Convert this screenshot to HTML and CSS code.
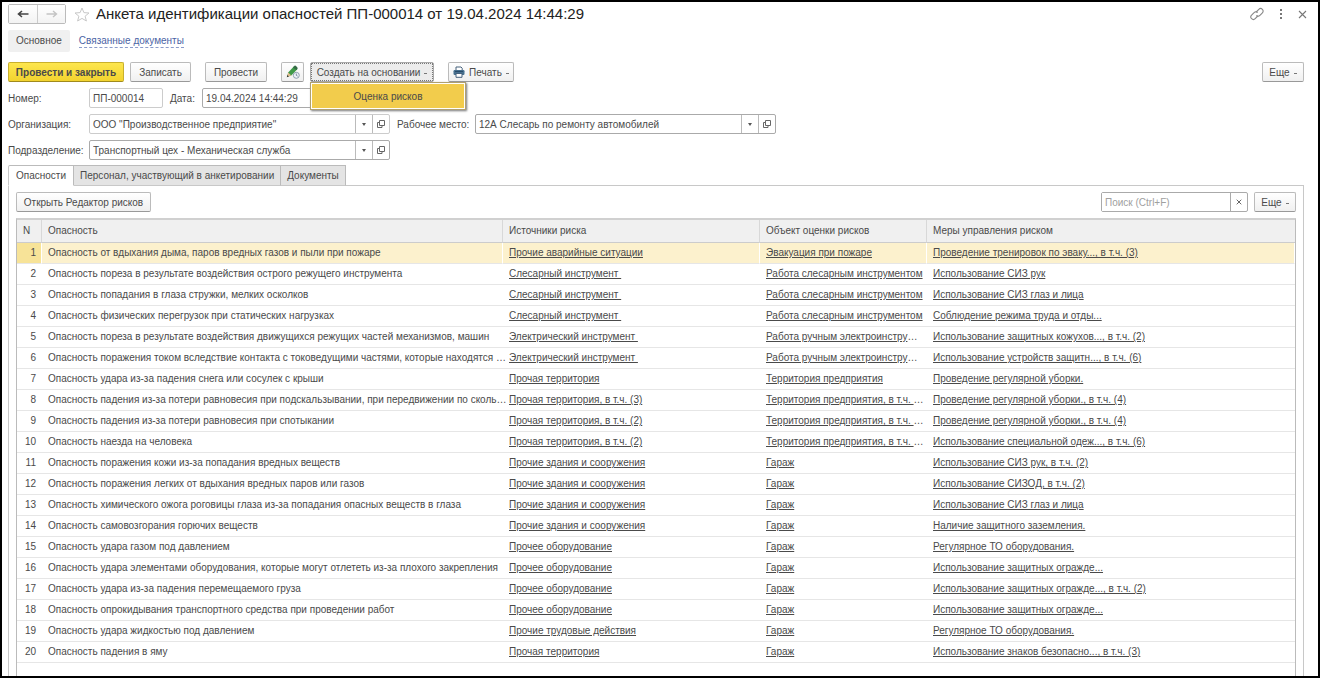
FILE: index.html
```
<!DOCTYPE html>
<html lang="ru">
<head>
<meta charset="utf-8">
<title>Анкета идентификации опасностей</title>
<link rel="stylesheet" href="styles.css">
</head>
<body>
<div class="window">
  <header class="titlebar">
    <div class="history">
      <button type="button" class="history-btn" aria-label="Назад"><svg width="12" height="8" viewBox="0 0 12 8"><path d="M11.500 4H2M5 1L1.500 4L5 7" fill="none" stroke="#444" stroke-width="1.600"/></svg></button>
      <button type="button" class="history-btn" aria-label="Вперед"><svg width="12" height="8" viewBox="0 0 12 8"><path d="M.5 4H10M7 1L10.500 4L7 7" fill="none" stroke="#c4c4c4" stroke-width="1.400"/></svg></button>
    </div>
    <svg class="star" width="16" height="15" viewBox="0 0 16 15"><path d="M8 1L9.900 5.600L15 6L11.100 9.200L12.400 14L8 11.400L3.600 14L4.900 9.200L1 6L6.100 5.600Z" fill="none" stroke="#c8c8c8" stroke-width="1"/></svg>
    <h1 class="title">Анкета идентификации опасностей ПП-000014 от 19.04.2024 14:44:29</h1>
    <div class="window-tools">
      <button type="button" class="tool" aria-label="Ссылка"><svg width="14" height="14" viewBox="0 0 14 14"><g fill="none" stroke="#888" stroke-width="1.100" stroke-linecap="round"><path d="M6.200 5L8.800 2.300A2.500 2.500 0 0 1 12.400 5.900L9.900 8.400A2.500 2.500 0 0 1 6.700 8.700"/><path d="M7.800 9L5.200 11.700A2.500 2.500 0 0 1 1.600 8.100L4.100 5.600A2.500 2.500 0 0 1 7.300 5.300"/></g></svg></button>
      <button type="button" class="tool" aria-label="Меню"><svg width="4" height="10" viewBox="0 0 4 10"><path d="M1 0h2v2H1zM1 4h2v2H1zM1 8h2v2H1z" fill="#777"/></svg></button>
      <button type="button" class="tool" aria-label="Закрыть"><svg width="9" height="9" viewBox="0 0 9 9"><path d="M1 1L8 8M8 1L1 8" stroke="#777" stroke-width="1.100"/></svg></button>
    </div>
  </header>

  <nav class="sections">
    <span class="section-current">Основное</span>
    <a class="section-link" href="#docs">Связанные документы</a>
  </nav>

  <div class="commands">
    <button type="button" class="btn btn-primary">Провести и закрыть</button>
    <button type="button" class="btn btn-save">Записать</button>
    <button type="button" class="btn btn-post">Провести</button>
    <button type="button" class="btn btn-icon" aria-label="Подписать"><svg width="14" height="14" viewBox="0 0 14 14"><path d="M1 12L2.200 7.600L8 1.300L11.300 4.300L5.300 10.600Z" fill="#3f9a49"/><path d="M7 2.400L8.500.8Q9.200.3 10 1L11.400 2.400Q12 3.100 11.400 3.900L10.300 5Z" fill="#346b45"/><path d="M1 12L2.200 7.600L5.300 10.600Z" fill="#e2bb8b"/><path d="M.8 12.200L1.400 10.100L2.900 11.500Z" fill="#333"/><circle cx="10.300" cy="10.300" r="3" fill="#eef3f8" stroke="#8296a8" stroke-width=".9"/><path d="M10.300 8.500V10.400L11.600 11.100" fill="none" stroke="#59718a" stroke-width=".8"/></svg></button>
    <div class="dropdown">
      <button type="button" class="btn btn-open" aria-expanded="true">Создать на основании<span class="caret"></span></button>
      <div class="menu"><button type="button" class="menu-item">Оценка рисков</button></div>
    </div>
    <button type="button" class="btn btn-print"><svg width="12" height="12" viewBox="0 0 12 12"><path d="M3 4V1H8L9.200 2.200V4" fill="#fff" stroke="#47627d" stroke-width="1"/><rect x=".5" y="4" width="11" height="5" rx="1.200" fill="#47708f"/><path d="M2 5.500H10" stroke="#284b69" stroke-width="1"/><path d="M3 7.500H9V11.300H3Z" fill="#fff" stroke="#47627d" stroke-width="1"/></svg>Печать<span class="caret"></span></button>
    <button type="button" class="btn btn-more">Еще<span class="caret"></span></button>
  </div>

  <form class="fields">
    <div class="field-row">
      <label class="label" for="num">Номер:</label>
      <input class="input input-num" id="num" value="ПП-000014" readonly>
      <label class="label-date" for="date">Дата:</label>
      <input class="input input-date" id="date" value="19.04.2024 14:44:29">
    </div>
    <div class="field-row">
      <label class="label" for="org">Организация:</label>
      <div class="combo combo-soft">
        <input class="combo-input" id="org" value='ООО "Производственное предприятие"'>
        <button type="button" class="combo-btn" aria-label="Выбрать"><span class="arrow"></span></button>
        <button type="button" class="combo-btn" aria-label="Открыть"><svg width="8" height="8" viewBox="0 0 8 8"><path d="M2.500.5H7.500V5.500H2.500ZM2.500 2.500H.5V7.500H5V5.500" fill="none" stroke="#666"/></svg></button>
      </div>
      <label class="label-place" for="place">Рабочее место:</label>
      <div class="combo">
        <input class="combo-input" id="place" value="12А Слесарь по ремонту автомобилей">
        <button type="button" class="combo-btn" aria-label="Выбрать"><span class="arrow"></span></button>
        <button type="button" class="combo-btn" aria-label="Открыть"><svg width="8" height="8" viewBox="0 0 8 8"><path d="M2.500.5H7.500V5.500H2.500ZM2.500 2.500H.5V7.500H5V5.500" fill="none" stroke="#666"/></svg></button>
      </div>
    </div>
    <div class="field-row">
      <label class="label" for="dep">Подразделение:</label>
      <div class="combo">
        <input class="combo-input" id="dep" value="Транспортный цех - Механическая служба">
        <button type="button" class="combo-btn" aria-label="Выбрать"><span class="arrow"></span></button>
        <button type="button" class="combo-btn" aria-label="Открыть"><svg width="8" height="8" viewBox="0 0 8 8"><path d="M2.500.5H7.500V5.500H2.500ZM2.500 2.500H.5V7.500H5V5.500" fill="none" stroke="#666"/></svg></button>
      </div>
    </div>
  </form>

  <div class="tabs" role="tablist">
    <button type="button" class="tab tab-active" role="tab" aria-selected="true">Опасности</button>
    <button type="button" class="tab" role="tab">Персонал, участвующий в анкетировании</button>
    <button type="button" class="tab" role="tab">Документы</button>
  </div>

  <section class="panel">
    <div class="panel-bar">
      <button type="button" class="btn btn-editor">Открыть Редактор рисков</button>
      <div class="search">
        <input class="search-input" aria-label="Поиск" placeholder="Поиск (Ctrl+F)">
        <button type="button" class="search-clear" aria-label="Очистить"><svg width="6" height="6" viewBox="0 0 6 6"><path d="M.7.7L5.300 5.300M5.300.7L.7 5.300" stroke="#666"/></svg></button>
      </div>
      <button type="button" class="btn btn-more-list">Еще<span class="caret"></span></button>
    </div>
    <div class="grid">
      <table class="table">
        <colgroup><col class="col-n"><col class="col-danger"><col class="col-source"><col class="col-object"><col></colgroup>
        <thead><tr><th>N</th><th>Опасность</th><th>Источники риска</th><th>Объект оценки рисков</th><th>Меры управления риском</th></tr></thead>
        <tbody>
          <tr class="selected"><td>1</td><td>Опасность от вдыхания дыма, паров вредных газов и пыли при пожаре</td><td><a href="#r">Прочие аварийные ситуации</a></td><td><a href="#r">Эвакуация при пожаре</a></td><td><a href="#r">Проведение тренировок по эваку..., в т.ч. (3)</a></td></tr>
          <tr><td>2</td><td>Опасность пореза в результате воздействия острого режущего инструмента</td><td><a href="#r">Слесарный инструмент </a></td><td><a href="#r">Работа слесарным инструментом</a></td><td><a href="#r">Использование СИЗ рук</a></td></tr>
          <tr><td>3</td><td>Опасность попадания в глаза стружки, мелких осколков</td><td><a href="#r">Слесарный инструмент </a></td><td><a href="#r">Работа слесарным инструментом</a></td><td><a href="#r">Использование СИЗ глаз и лица</a></td></tr>
          <tr><td>4</td><td>Опасность физических перегрузок при статических нагрузках</td><td><a href="#r">Слесарный инструмент </a></td><td><a href="#r">Работа слесарным инструментом</a></td><td><a href="#r">Соблюдение режима труда и отды...</a></td></tr>
          <tr><td>5</td><td>Опасность пореза в результате воздействия движущихся режущих частей механизмов, машин</td><td><a href="#r">Электрический инструмент </a></td><td><a href="#r">Работа ручным электроинстру</a>…</td><td><a href="#r">Использование защитных кожухов..., в т.ч. (2)</a></td></tr>
          <tr><td>6</td><td>Опасность поражения током вследствие контакта с токоведущими частями, которые находятся …</td><td><a href="#r">Электрический инструмент </a></td><td><a href="#r">Работа ручным электроинстру</a>…</td><td><a href="#r">Использование устройств защитн..., в т.ч. (6)</a></td></tr>
          <tr><td>7</td><td>Опасность удара из-за падения снега или сосулек с крыши</td><td><a href="#r">Прочая территория</a></td><td><a href="#r">Территория предприятия</a></td><td><a href="#r">Проведение регулярной уборки.</a></td></tr>
          <tr><td>8</td><td>Опасность падения из-за потери равновесия при подскальзывании, при передвижении по сколь…</td><td><a href="#r">Прочая территория, в т.ч. (3)</a></td><td><a href="#r">Территория предприятия, в т.ч. </a>…</td><td><a href="#r">Проведение регулярной уборки., в т.ч. (4)</a></td></tr>
          <tr><td>9</td><td>Опасность падения из-за потери равновесия при спотыкании</td><td><a href="#r">Прочая территория, в т.ч. (2)</a></td><td><a href="#r">Территория предприятия, в т.ч. </a>…</td><td><a href="#r">Проведение регулярной уборки., в т.ч. (4)</a></td></tr>
          <tr><td>10</td><td>Опасность наезда на человека</td><td><a href="#r">Прочая территория, в т.ч. (2)</a></td><td><a href="#r">Территория предприятия, в т.ч. </a>…</td><td><a href="#r">Использование специальной одеж..., в т.ч. (6)</a></td></tr>
          <tr><td>11</td><td>Опасность поражения кожи из-за попадания вредных веществ</td><td><a href="#r">Прочие здания и сооружения</a></td><td><a href="#r">Гараж</a></td><td><a href="#r">Использование СИЗ рук, в т.ч. (2)</a></td></tr>
          <tr><td>12</td><td>Опасность поражения легких от вдыхания вредных паров или газов</td><td><a href="#r">Прочие здания и сооружения</a></td><td><a href="#r">Гараж</a></td><td><a href="#r">Использование СИЗОД, в т.ч. (2)</a></td></tr>
          <tr><td>13</td><td>Опасность химического ожога роговицы глаза из-за попадания опасных веществ в глаза</td><td><a href="#r">Прочие здания и сооружения</a></td><td><a href="#r">Гараж</a></td><td><a href="#r">Использование СИЗ глаз и лица</a></td></tr>
          <tr><td>14</td><td>Опасность самовозгорания горючих веществ</td><td><a href="#r">Прочие здания и сооружения</a></td><td><a href="#r">Гараж</a></td><td><a href="#r">Наличие защитного заземления.</a></td></tr>
          <tr><td>15</td><td>Опасность удара газом под давлением</td><td><a href="#r">Прочее оборудование</a></td><td><a href="#r">Гараж</a></td><td><a href="#r">Регулярное ТО оборудования.</a></td></tr>
          <tr><td>16</td><td>Опасность удара элементами оборудования, которые могут отлететь из-за плохого закрепления</td><td><a href="#r">Прочее оборудование</a></td><td><a href="#r">Гараж</a></td><td><a href="#r">Использование защитных огражде...</a></td></tr>
          <tr><td>17</td><td>Опасность удара из-за падения перемещаемого груза</td><td><a href="#r">Прочее оборудование</a></td><td><a href="#r">Гараж</a></td><td><a href="#r">Использование защитных огражде..., в т.ч. (2)</a></td></tr>
          <tr><td>18</td><td>Опасность опрокидывания транспортного средства при проведении работ</td><td><a href="#r">Прочее оборудование</a></td><td><a href="#r">Гараж</a></td><td><a href="#r">Использование защитных огражде...</a></td></tr>
          <tr><td>19</td><td>Опасность удара жидкостью под давлением</td><td><a href="#r">Прочие трудовые действия</a></td><td><a href="#r">Гараж</a></td><td><a href="#r">Регулярное ТО оборудования.</a></td></tr>
          <tr><td>20</td><td>Опасность падения в яму</td><td><a href="#r">Прочая территория</a></td><td><a href="#r">Гараж</a></td><td><a href="#r">Использование знаков безопасно..., в т.ч. (3)</a></td></tr>
        </tbody>
      </table>
    </div>
  </section>
</div>
</body>
</html>
```
FILE: styles.css
```
* {
  box-sizing: border-box;
}

body {
  margin: 0;
  font-family: "Liberation Sans", Arial, sans-serif;
  font-size: 10px;
  color: #4a4a4a;
}

button,
input {
  font: inherit;
  color: inherit;
  margin: 0;
}

button {
  padding: 0;
}

.window {
  display: flex;
  flex-direction: column;
  height: 100vh;
  overflow: hidden;
  border: 2px solid #000;
  background: #fff;
  padding: 2px 14px 0 6px;
}

.titlebar {
  display: flex;
  align-items: center;
  height: 20px;
}

.history {
  display: flex;
  border: 1px solid #bbb;
  border-radius: 2px;
}

.history-btn {
  display: flex;
  align-items: center;
  justify-content: center;
  width: 28px;
  height: 18px;
  border: 0;
  background: linear-gradient(#fff, #f3f3f3);
}

.history-btn + .history-btn {
  border-left: 1px solid #ccc;
}

.star {
  margin: 0 6px 0 8px;
}

.title {
  margin: 0;
  font-size: 15px;
  line-height: 20px;
  font-weight: normal;
  color: #222;
}

.window-tools {
  display: flex;
  align-items: center;
  gap: 15px;
  margin-left: auto;
  margin-right: -3px;
}

.tool {
  display: flex;
  border: 0;
  background: none;
}

.sections {
  display: flex;
  align-items: center;
  gap: 9px;
  margin-top: 6px;
}

.section-current {
  padding: 0 8px;
  line-height: 22px;
  background: #f0f0f0;
  border-radius: 2px;
}

.section-link {
  color: #4c64a5;
  text-decoration: none;
  line-height: 12px;
  border-bottom: 1px dashed #8a9bcb;
}

.commands {
  display: flex;
  margin-top: 10px;
}

.btn {
  display: flex;
  align-items: center;
  justify-content: center;
  height: 20px;
  border: 1px solid #bbb;
  border-bottom-color: #999;
  border-radius: 2px;
  background: linear-gradient(#fff, #f0f0f0);
  white-space: nowrap;
}

.btn-primary {
  width: 116px;
  font-weight: bold;
  background: linear-gradient(#fde64e, #f2d32f);
  border-color: #c9b02c;
  border-bottom-color: #a08a1c;
}

.btn-save {
  width: 61px;
  margin-left: 6px;
}

.btn-post {
  width: 62px;
  margin-left: 14px;
}

.btn-icon {
  width: 23px;
  margin-left: 14px;
}

.dropdown {
  position: relative;
  margin-left: 6px;
}

.btn-open {
  width: 124px;
  background: #ececec;
  border: 1px solid #aaa;
  outline: 1px dotted #777;
  outline-offset: -2px;
}

.menu {
  position: absolute;
  z-index: 2;
  top: 20px;
  left: 0;
  width: 156px;
  padding: 1px;
  background: #fff;
  border: 1px solid #b0a070;
  box-shadow: 1px 1px 2px #777;
}

.menu-item {
  display: block;
  width: 100%;
  height: 24px;
  border: 0;
  background: #f2cc4c;
}

.btn-print {
  width: 66px;
  margin-left: 14px;
  gap: 4px;
}

.btn-more {
  width: 42px;
  margin-left: auto;
}

.caret {
  width: 3px;
  height: 1px;
  margin: 3px 0 0 4px;
  background: #777;
}

.btn-print .caret {
  margin-left: 0;
}

.fields {
  display: flex;
  flex-direction: column;
  gap: 6px;
  margin-top: 6px;
}

.field-row {
  display: flex;
  align-items: center;
}

.label {
  width: 81px;
}

.input {
  height: 20px;
  border: 1px solid #aaa;
  border-radius: 2px;
  padding: 0 3px;
}

.input-num {
  width: 74px;
  border-color: #ccc;
}

.label-date {
  width: 39px;
  padding-left: 7px;
}

.input-date {
  width: 130px;
}

.combo {
  display: flex;
  width: 301px;
  height: 20px;
  border: 1px solid #aaa;
  border-radius: 2px;
}

.combo-soft {
  border-color: #ccc;
}

.combo-input {
  flex: 1;
  min-width: 0;
  border: 0;
  padding: 0 3px;
  background: none;
}

.combo-btn {
  display: flex;
  align-items: center;
  justify-content: center;
  width: 17px;
  border: 0;
  border-left: 1px solid #bbb;
  background: none;
}

.arrow {
  border: 2px solid transparent;
  border-top: 3px solid #555;
  border-bottom: 0;
}

.label-place {
  width: 85px;
  padding-left: 7px;
}

.tabs {
  position: relative;
  display: flex;
  margin-top: 5px;
}

.tab {
  height: 21px;
  padding: 0 6px;
  border: 1px solid #bbb;
  border-left: 0;
  border-bottom-color: #c8c8c8;
  background: #e4e4e4;
}

.tab-active {
  padding: 0 7px;
  border-left: 1px solid #c8c8c8;
  border-bottom-color: #fff;
  border-radius: 2px 0 0 0;
  background: #fff;
}

.panel {
  display: flex;
  flex: 1;
  flex-direction: column;
  min-height: 0;
  margin-top: -1px;
  padding: 6px 7px 0;
  border: 1px solid #c8c8c8;
  border-bottom: 0;
}

.panel-bar {
  display: flex;
}

.btn-editor {
  width: 135px;
}

.search {
  display: flex;
  width: 147px;
  height: 20px;
  margin-left: auto;
  border: 1px solid #aaa;
  border-radius: 2px;
}

.search-input {
  flex: 1;
  min-width: 0;
  border: 0;
  padding: 0 3px;
}

.search-input::placeholder {
  color: #a0a0a0;
}

.search-clear {
  display: flex;
  align-items: center;
  justify-content: center;
  width: 17px;
  border: 0;
  border-left: 1px solid #aaa;
  background: none;
}

.btn-more-list {
  width: 42px;
  margin-left: 6px;
}

.grid {
  flex: 1;
  min-height: 0;
  margin-top: 6px;
  overflow: hidden;
  border: 1px solid #bbb;
  border-top: 2px solid #d0d0d0;
  border-bottom: 0;
}

.table {
  width: 100%;
  table-layout: fixed;
  border-collapse: separate;
  border-spacing: 0;
}

.col-n {
  width: 25px;
}

.col-danger {
  width: 461px;
}

.col-source {
  width: 257px;
}

.col-object {
  width: 167px;
}

.table th,
.table td {
  height: 21px;
  padding: 0 0 0 6px;
  border-bottom: 1px solid #e6e6e6;
  font-weight: normal;
  text-align: left;
  line-height: 12px;
  white-space: pre;
}

.table th {
  height: 23px;
  background: #f0f0f0;
  border-bottom-color: #ccc;
  border-right: 1px solid #d8d8d8;
}

.table th:last-child {
  border-right: 0;
}

.table td:first-child {
  padding: 0 6px 0 0;
  text-align: right;
}

.table .selected td {
  background: #fcf1cd;
  border-right: 1px solid #fff;
}

.table .selected td:first-child {
  padding-right: 5px;
  background: #f7e398;
}

.table a {
  color: inherit;
}
```
